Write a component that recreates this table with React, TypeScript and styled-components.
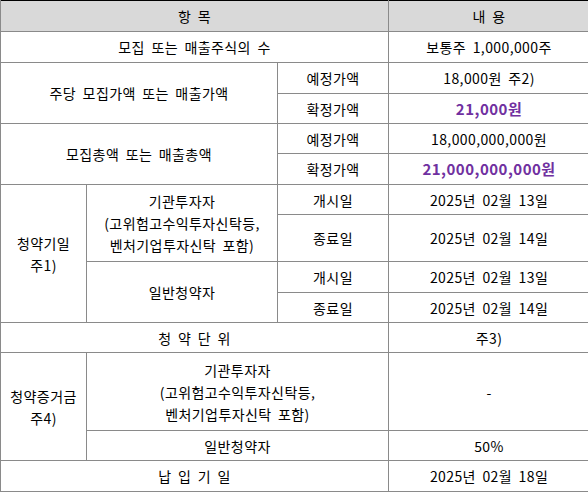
import React from 'react'
import styled, { createGlobalStyle } from 'styled-components'

const GlobalStyle = createGlobalStyle`
  html, body {
    margin: 0;
    padding: 0;
    background: #fff;
  }
  body {
    font-family: "Noto Sans CJK KR", "Noto Sans", sans-serif;
    font-size: 14px;
    letter-spacing: 0.4px;
    color: #000;
  }
`

const Table = styled.table`
  width: 589px;
  border-collapse: collapse;
  table-layout: fixed;
  border-top: 1px solid #000;
  border-left: 1px solid #000;
  border-bottom: 1px solid #000;
`

const Row = styled.tr<{ $h?: number }>`
  height: ${({ $h }) => $h ?? 31}px;
`

const Head = styled.th`
  background: #d9d9d9;
  font-weight: normal;
  text-align: center;
  border: 1px solid #8a8a8a;
  border-top: none;
  padding: 0;
  word-spacing: 3px;
`

const Cell = styled.td<{ $tight?: boolean }>`
  text-align: center;
  vertical-align: middle;
  border: 1px solid #8a8a8a;
  padding: 0;
  line-height: ${({ $tight }) => ($tight ? '22px' : '18px')};
  word-spacing: 3px;
  white-space: nowrap;
`

const Price = styled.span`
  color: #7030a0;
  font-weight: bold;
  font-size: 15px;
  letter-spacing: 0.5px;
  word-spacing: 0;
`

const Investor = () => (
  <>
    기관투자자
    <br />
    (고위험고수익투자신탁등,
    <br />
    벤처기업투자신탁 포함)
  </>
)

export default function App() {
  return (
    <>
      <GlobalStyle />
      <Table>
        <colgroup>
          <col style={{ width: 86 }} />
          <col style={{ width: 191 }} />
          <col style={{ width: 111 }} />
          <col style={{ width: 201 }} />
        </colgroup>
        <tbody>
          <Row $h={31}>
            <Head colSpan={3}>항 목</Head>
            <Head>내 용</Head>
          </Row>
          <Row>
            <Cell colSpan={3}>모집 또는 매출주식의 수</Cell>
            <Cell>보통주 1,000,000주</Cell>
          </Row>
          <Row>
            <Cell colSpan={2} rowSpan={2}>주당 모집가액 또는 매출가액</Cell>
            <Cell>예정가액</Cell>
            <Cell>18,000원 주2)</Cell>
          </Row>
          <Row $h={30}>
            <Cell>확정가액</Cell>
            <Cell><Price>21,000원</Price></Cell>
          </Row>
          <Row $h={30}>
            <Cell colSpan={2} rowSpan={2}>모집총액 또는 매출총액</Cell>
            <Cell>예정가액</Cell>
            <Cell>18,000,000,000원</Cell>
          </Row>
          <Row>
            <Cell>확정가액</Cell>
            <Cell><Price>21,000,000,000원</Price></Cell>
          </Row>
          <Row $h={30}>
            <Cell rowSpan={4} $tight>청약기일<br />주1)</Cell>
            <Cell rowSpan={2} $tight><Investor /></Cell>
            <Cell>개시일</Cell>
            <Cell>2025년 02월 13일</Cell>
          </Row>
          <Row $h={47}>
            <Cell>종료일</Cell>
            <Cell>2025년 02월 14일</Cell>
          </Row>
          <Row>
            <Cell rowSpan={2}>일반청약자</Cell>
            <Cell>개시일</Cell>
            <Cell>2025년 02월 13일</Cell>
          </Row>
          <Row $h={30}>
            <Cell>종료일</Cell>
            <Cell>2025년 02월 14일</Cell>
          </Row>
          <Row $h={30}>
            <Cell colSpan={3}>청 약 단 위</Cell>
            <Cell>주3)</Cell>
          </Row>
          <Row $h={78}>
            <Cell rowSpan={2} $tight>청약증거금<br />주4)</Cell>
            <Cell colSpan={2} $tight><Investor /></Cell>
            <Cell>-</Cell>
          </Row>
          <Row $h={30}>
            <Cell colSpan={2}>일반청약자</Cell>
            <Cell>50%</Cell>
          </Row>
          <Row>
            <Cell colSpan={3}>납 입 기 일</Cell>
            <Cell>2025년 02월 18일</Cell>
          </Row>
        </tbody>
      </Table>
    </>
  )
}
